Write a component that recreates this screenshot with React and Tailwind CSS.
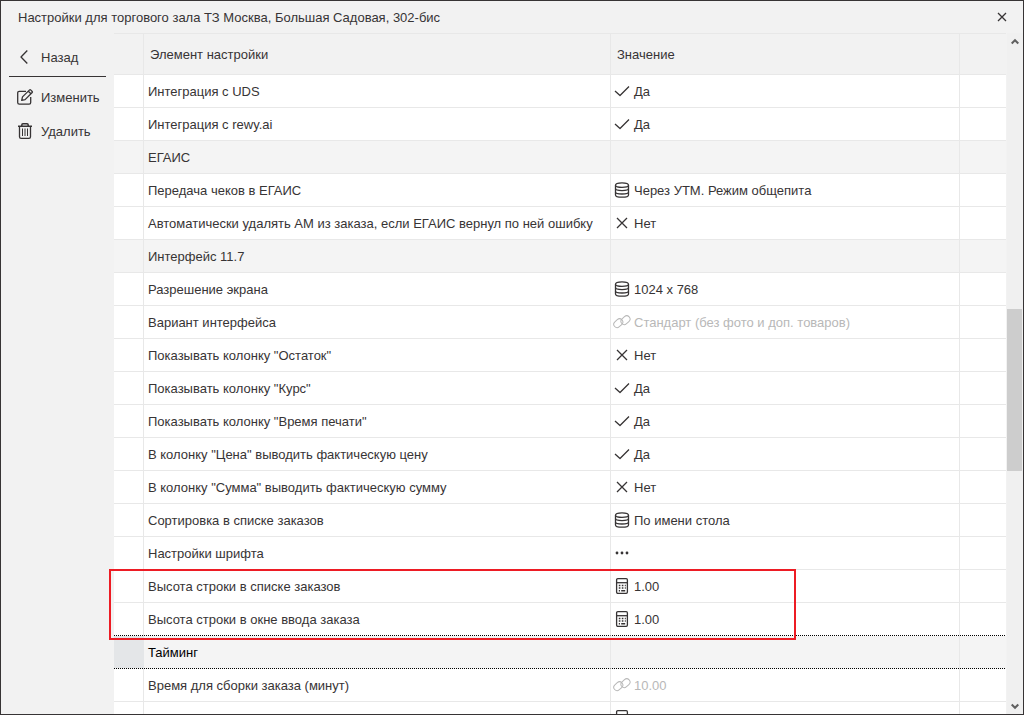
import { useState } from 'react'

const ICONS = {
  check: <path d="M1 8l5 4.5L15 3.5" />,
  cross: <path d="M3 3l10 10M13 3L3 13" />,
  database: (
    <>
      <path d="M1.500 3.200C1.500 1.600 4 .8 8 .8s6.500.8 6.500 2.400S12 5.300 8 5.300s-6.500-.6-6.500-2.100z" />
      <path d="M1.500 3.200v9.800c0 1.500 2.500 2.200 6.500 2.200s6.500-.7 6.500-2.200V3.200" />
      <path d="M1.500 6.500c0 1.500 2.500 2.100 6.500 2.100s6.500-.6 6.500-2.100M1.500 9.900c0 1.500 2.500 2.100 6.500 2.100s6.500-.6 6.500-2.100" />
    </>
  ),
  link: (
    <g strokeWidth="1">
      <rect x="-4.9" y="-3.3" width="9.8" height="6.6" rx="3.3" transform="translate(4.300 9.200) rotate(-42)" />
      <rect x="-4.9" y="-3.3" width="9.8" height="6.6" rx="3.3" transform="translate(11.500 6.200) rotate(-42)" />
    </g>
  ),
  calc: (
    <>
      <rect x="2.6" y="0.7" width="10.8" height="14.6" rx="1.2" />
      <path d="M2.600 4.700h10.800" />
      <path strokeWidth="1.6" strokeDasharray="1.6 1.400" d="M4.800 7.500h7M4.800 10h7" />
      <path strokeWidth="1.6" d="M4.800 12.700h1.200M7.200 12.700h4" />
    </>
  ),
  dots: (
    <g fill="currentColor" stroke="none">
      <circle cx="3" cy="8" r="1.4" />
      <circle cx="8" cy="8" r="1.4" />
      <circle cx="13" cy="8" r="1.4" />
    </g>
  ),
  back: <path d="M10.300 1.500L4 8l6.300 6.500" />,
  edit: (
    <>
      <path d="M9 2.300H2.300C1.300 2.300.7 2.900.7 3.900v9.600c0 1 .6 1.700 1.600 1.700h9.800c1 0 1.600-.7 1.600-1.700V8" />
      <path d="M4.700 11.400l.8-3.500L12.600.9c.3-.3.700-.3 1 0l1.600 1.600c.3.3.3.700 0 1l-7.100 7.100-3.400.8zM11.400 2.300l2.500 2.500" />
    </>
  ),
  trash: (
    <>
      <path strokeWidth="1.500" d="M1 3.200h14M4.800 3V1.900c0-.7.400-1.100 1.100-1.100h4.200c.7 0 1.100.4 1.100 1.100V3" />
      <path d="M2.500 3.500v10.200c0 1 .7 1.600 1.600 1.600h7.800c.9 0 1.600-.6 1.600-1.600V3.500" />
      <path strokeWidth="1" d="M5.500 5.500v7.500M8 5.500v7.500M10.500 5.500v7.500" />
    </>
  ),
}

function Icon({ name }) {
  return (
    <svg
      className="size-4 shrink-0 overflow-visible"
      viewBox="0 0 16 16"
      fill="none"
      stroke="currentColor"
      strokeWidth="1.3"
      strokeLinejoin="round"
      aria-hidden="true"
    >
      {ICONS[name]}
    </svg>
  )
}

const ROWS = [
  { name: 'Интеграция с UDS', icon: 'check', value: 'Да' },
  { name: 'Интеграция с rewy.ai', icon: 'check', value: 'Да' },
  { name: 'ЕГАИС', group: true },
  { name: 'Передача чеков в ЕГАИС', icon: 'database', value: 'Через УТМ. Режим общепита' },
  { name: 'Автоматически удалять АМ из заказа, если ЕГАИС вернул по ней ошибку', icon: 'cross', value: 'Нет' },
  { name: 'Интерфейс 11.7', group: true },
  { name: 'Разрешение экрана', icon: 'database', value: '1024 x 768' },
  { name: 'Вариант интерфейса', icon: 'link', value: 'Стандарт (без фото и доп. товаров)', inherited: true },
  { name: 'Показывать колонку "Остаток"', icon: 'cross', value: 'Нет' },
  { name: 'Показывать колонку "Курс"', icon: 'check', value: 'Да' },
  { name: 'Показывать колонку "Время печати"', icon: 'check', value: 'Да' },
  { name: 'В колонку "Цена" выводить фактическую цену', icon: 'check', value: 'Да' },
  { name: 'В колонку "Сумма" выводить фактическую сумму', icon: 'cross', value: 'Нет' },
  { name: 'Сортировка в списке заказов', icon: 'database', value: 'По имени стола' },
  { name: 'Настройки шрифта', icon: 'dots', value: '' },
  { name: 'Высота строки в списке заказов', icon: 'calc', value: '1.00' },
  { name: 'Высота строки в окне ввода заказа', icon: 'calc', value: '1.00' },
  { name: 'Тайминг', group: true },
  { name: 'Время для сборки заказа (минут)', icon: 'link', value: '10.00', inherited: true },
  { name: 'Готовность заказа', icon: 'calc', value: '1.00' },
]

// пунктир 1px через 1px по нижнему краю всей строки
const DOTTED =
  'bg-[repeating-linear-gradient(90deg,#000_0_1px,transparent_1px_2px)] bg-[length:100%_1px] bg-bottom bg-no-repeat'

function Row({ row, selected, beforeSelected, onSelect }) {
  // выделенная строка обведена пунктиром сверху и снизу
  const dotted = selected || beforeSelected
  const bg = row.group ? 'bg-[#f4f4f4]' : 'bg-white'
  const cell = `h-[33px] p-0 border-b ${dotted ? 'border-b-transparent' : 'border-b-[#e8e8e8]'}`

  return (
    <tr className={`${bg} ${dotted ? DOTTED : ''}`} onClick={onSelect}>
      <td className={`${cell} ${selected ? '' : 'border-r border-r-[#e8e8e8]'}`}>
        {selected && <div className="h-8 bg-[#e4e6e8]" />}
      </td>
      <td className={`${cell} border-r border-r-[#e8e8e8] pt-0.5 pl-1 whitespace-nowrap ${selected ? 'text-black' : ''}`}>
        {row.name}
      </td>
      <td className={`${cell} border-r border-r-[#e8e8e8] pl-[3px]`}>
        {row.icon && (
          <div className={`flex items-center gap-1 whitespace-nowrap ${row.inherited ? 'text-[#b8b8b8]' : ''}`}>
            <Icon name={row.icon} />
            <span className="pt-0.5">{row.value}</span>
          </div>
        )}
      </td>
      <td className={cell} />
    </tr>
  )
}

function SideButton({ icon, children }) {
  return (
    <button type="button" className="flex h-[34px] w-full items-center gap-2 pl-2 text-left hover:bg-black/5">
      <Icon name={icon} />
      <span className="pt-0.5">{children}</span>
    </button>
  )
}

function ScrollBar() {
  return (
    <div className="ml-px flex w-4 shrink-0 flex-col items-center bg-[#f0f0f0] pr-px">
      <button type="button" aria-label="Вверх" className="flex h-[17px] w-full items-center justify-center text-[#606060]">
        <svg className="h-2 w-2" viewBox="0 0 8 8" fill="none" stroke="currentColor" strokeWidth="2">
          <path d="M.7 5.500L4 2.200l3.300 3.300" />
        </svg>
      </button>
      <div className="flex w-full flex-1 flex-col">
        <div className="grow-[259]" />
        <div className="grow-[162] bg-[#cdcdcd]" />
        <div className="grow-[226]" />
      </div>
      <button type="button" aria-label="Вниз" className="flex h-[17px] w-full items-center justify-center text-[#606060]">
        <svg className="h-2 w-2" viewBox="0 0 8 8" fill="none" stroke="currentColor" strokeWidth="2">
          <path d="M.7 2.500L4 5.800l3.300-3.300" />
        </svg>
      </button>
    </div>
  )
}

export default function App() {
  const [selected, setSelected] = useState(17)

  return (
    <div className="flex h-screen flex-col overflow-hidden border border-[#373435] bg-[#f2f2f2] font-['Liberation_Sans',Arial,sans-serif] text-[13px] leading-4 text-[#373435]">
      <header className="flex h-8 shrink-0 items-center justify-between pr-4 pl-[17px]">
        <h1 className="pt-0.5">Настройки для торгового зала ТЗ Москва, Большая Садовая, 302-бис</h1>
        <button type="button" aria-label="Закрыть">
          <svg className="size-[10px]" viewBox="0 0 10 10" fill="none" stroke="currentColor" strokeWidth="1.3">
            <path d="M1 1l8 8M9 1L1 9" />
          </svg>
        </button>
      </header>

      <div className="flex min-h-0 flex-1">
        <nav className="ml-2 w-[97px] shrink-0 pt-[7px]">
          <div className="mb-[3px] border-b border-[#373435] pb-0.5">
            <SideButton icon="back">Назад</SideButton>
          </div>
          <SideButton icon="edit">Изменить</SideButton>
          <SideButton icon="trash">Удалить</SideButton>
        </nav>

        <main className="min-w-0 flex-1 overflow-hidden pl-2">
          <div className="relative">
            <table className="w-full table-fixed border-separate border-spacing-0">
              <colgroup>
                <col className="w-[30px]" />
                <col />
                <col className="w-[349px]" />
                <col className="w-[46px]" />
              </colgroup>
              <thead>
                <tr className="text-left">
                  <th className="h-[42px] border-y border-r border-[#e8e8e8] p-0" />
                  <th className="border-y border-r border-[#e8e8e8] p-0 pt-0.5 pl-[6px] font-normal">Элемент настройки</th>
                  <th className="border-y border-r border-[#e8e8e8] p-0 pt-0.5 pl-[6px] font-normal">Значение</th>
                  <th className="border-y border-[#e8e8e8] p-0" />
                </tr>
              </thead>
              <tbody>
                {ROWS.map((row, i) => (
                  <Row
                    key={i}
                    row={row}
                    selected={i === selected}
                    beforeSelected={i + 1 === selected}
                    onSelect={() => setSelected(i)}
                  />
                ))}
              </tbody>
            </table>
            {/* рамка вокруг настроек высоты строки */}
            <div className="pointer-events-none absolute top-[536px] right-[210px] -left-[5px] h-[71px] border-2 border-[#ed1c24]" />
          </div>
        </main>

        <ScrollBar />
      </div>
    </div>
  )
}
